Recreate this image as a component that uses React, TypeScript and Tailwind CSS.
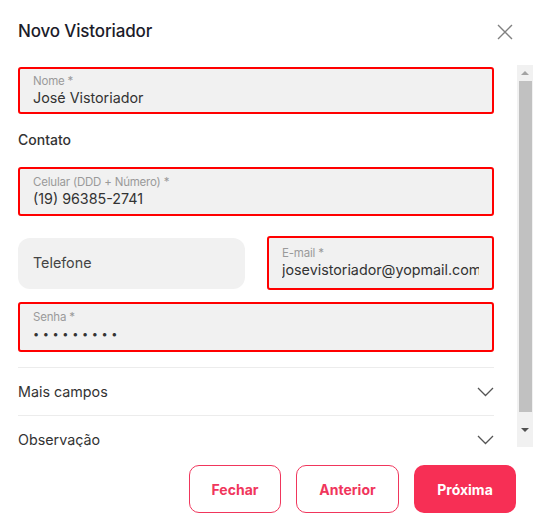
import React from 'react';

function Field({ label, value, className = '', mask = false }: { label: string; value: string; className?: string; mask?: boolean }) {
  return (
    <div className={`border-2 border-[#ff0000] rounded-[3px] bg-[#f1f1f1] px-[13px] flex flex-col justify-center ${className}`}>
      <span className="text-[11.5px] leading-[14px] text-[#9a9a9a] tracking-[-0.2px]">{label}</span>
      {mask ? (
        <span className="text-[11px] leading-[20px] text-[#333] tracking-[3.6px] whitespace-nowrap">{value}</span>
      ) : (
        <span className="block overflow-hidden text-[14.3px] leading-[20px] text-[#333] whitespace-nowrap">{value}</span>
      )}
    </div>
  );
}

function Chevron() {
  return (
    <svg width="17" height="10" viewBox="0 0 17 10" fill="none" stroke="#555" strokeWidth="1.3">
      <path d="M1 1l7.5 7.5L16 1" />
    </svg>
  );
}

function Scrollbar() {
  return (
    <div className="w-[16px] shrink-0 bg-[#f1f1f1] flex flex-col items-center">
      <div className="h-[16px] flex items-center justify-center">
        <div className="w-0 h-0 border-l-[4px] border-r-[4px] border-b-[4px] border-l-transparent border-r-transparent border-b-[#a3a3a3]" />
      </div>
      <div className="w-[13px] h-[331px] bg-[#c1c1c1]" />
      <div className="flex-1 flex items-center justify-center">
        <div className="w-0 h-0 border-l-[4px] border-r-[4px] border-t-[4px] border-l-transparent border-r-transparent border-t-[#505050]" />
      </div>
    </div>
  );
}

export default function App() {
  return (
    <div className="w-[533px] h-[528px] bg-white flex flex-col font-['Inter',sans-serif]">
      <div className="h-[65px] shrink-0 flex items-center justify-between pl-[18px] pr-[20px] pb-[2px]">
        <h1 className="text-[17px] font-medium text-[#1c1c2a] tracking-[-0.15px]">Novo Vistoriador</h1>
        <svg width="16" height="16" viewBox="0 0 16 16" stroke="#808080" strokeWidth="1.4">
          <path d="M1 1l14 14M15 1L1 15" />
        </svg>
      </div>

      <div className="h-[382px] shrink-0 flex">
        <div className="flex-1 overflow-hidden pl-[18px] pr-[23px] pt-[2px]">
          <Field label="Nome *" value="José Vistoriador" className="h-[47px]" />
          <p className="mt-[16px] text-[14px] leading-[20px] font-medium text-[#333]">Contato</p>
          <Field label="Celular (DDD + Número) *" value="(19) 96385-2741" className="mt-[17px] h-[49px]" />
          <div className="mt-[20px] grid grid-cols-2 gap-[22px] items-center">
            <div className="h-[51px] rounded-[12px] bg-[#f1f1f1] px-[15px] flex items-center text-[14.3px] text-[#444]">Telefone</div>
            <Field label="E-mail *" value="josevistoriador@yopmail.com" className="h-[54px]" />
          </div>
          <Field label="Senha *" value="•••••••••" mask className="mt-[12px] h-[50px]" />
          <div className="mt-[15px] border-t border-[#ececec]">
            <div className="h-[47px] flex items-center justify-between">
              <span className="text-[14.3px] text-[#333]">Mais campos</span>
              <Chevron />
            </div>
            <div className="h-[48px] flex items-center justify-between border-t border-[#ececec]">
              <span className="text-[14.3px] text-[#333]">Observação</span>
              <Chevron />
            </div>
          </div>
        </div>
        <Scrollbar />
      </div>

      <div className="flex justify-end gap-[15px] pr-[17px] pt-[18px]">
        <button className="w-[92px] h-[48px] rounded-[10px] border border-[#f0365c] text-[#f0365c] text-[14px] font-bold">Fechar</button>
        <button className="w-[103px] h-[48px] rounded-[10px] border border-[#f0365c] text-[#f0365c] text-[14px] font-bold">Anterior</button>
        <button className="w-[102px] h-[48px] rounded-[10px] bg-[#f72f55] text-white text-[14px] font-bold">Próxima</button>
      </div>
    </div>
  );
}
